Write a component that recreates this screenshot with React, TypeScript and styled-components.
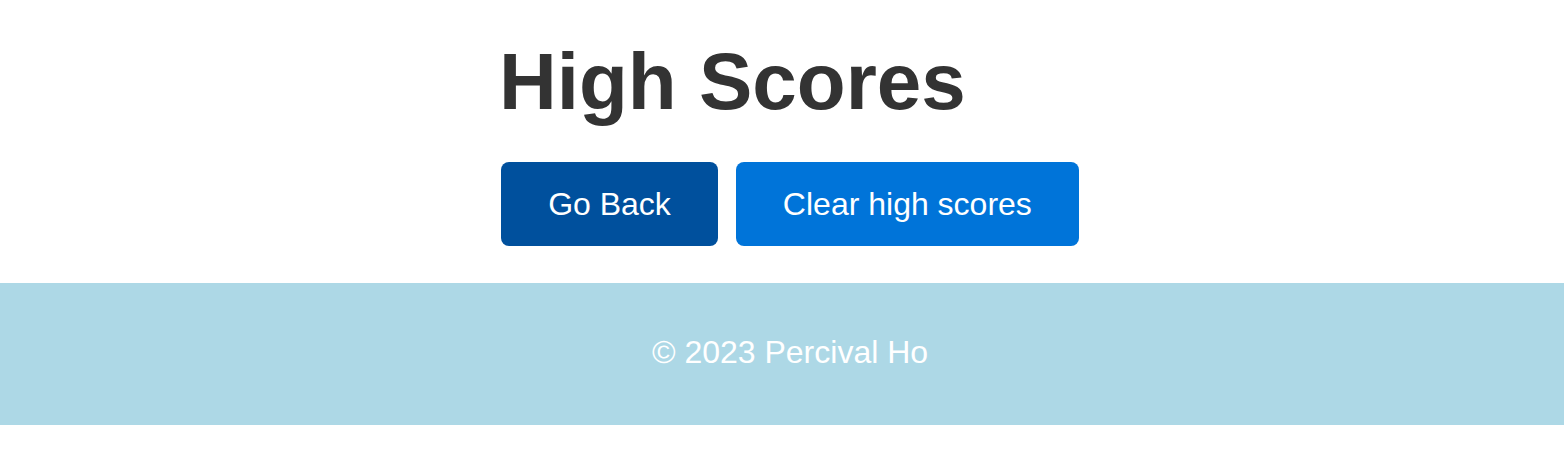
import styled, { createGlobalStyle } from 'styled-components'

const GlobalStyle = createGlobalStyle`
  body {
    margin: 0;
    font-family: 'Liberation Sans', Arial, sans-serif;
    background: #fff;
  }
`

const Main = styled.main`
  display: flex;
  justify-content: center;
  padding: 42px 0 37px 16px;
`

const Panel = styled.div`
  width: 582px;
  display: flex;
  flex-direction: column;
  gap: 40px;
`

const Title = styled.h1`
  margin: 0;
  font-size: 80px;
  line-height: 80px;
  font-weight: 700;
  color: #333;
`

const Actions = styled.div`
  display: flex;
  justify-content: center;
  gap: 18px;
`

const Button = styled.button<{ $dark?: boolean }>`
  border: none;
  border-radius: 8px;
  padding: 24px 47px;
  font-family: inherit;
  font-size: 32px;
  line-height: 36px;
  color: #fff;
  background-color: ${p => (p.$dark ? '#00509d' : '#0074d9')};
  cursor: pointer;
`

const Footer = styled.footer`
  background-color: #add8e6;
  color: #fff;
  text-align: center;
  font-size: 32px;
  line-height: 36px;
  padding: 51px 0 55px 16px;
`

const App = () => {
  return (
    <>
      <GlobalStyle />
      <Main>
        <Panel>
          <Title>High Scores</Title>
          <Actions>
            <Button $dark>Go Back</Button>
            <Button>Clear high scores</Button>
          </Actions>
        </Panel>
      </Main>
      <Footer>© 2023 Percival Ho</Footer>
    </>
  )
}

export default App
